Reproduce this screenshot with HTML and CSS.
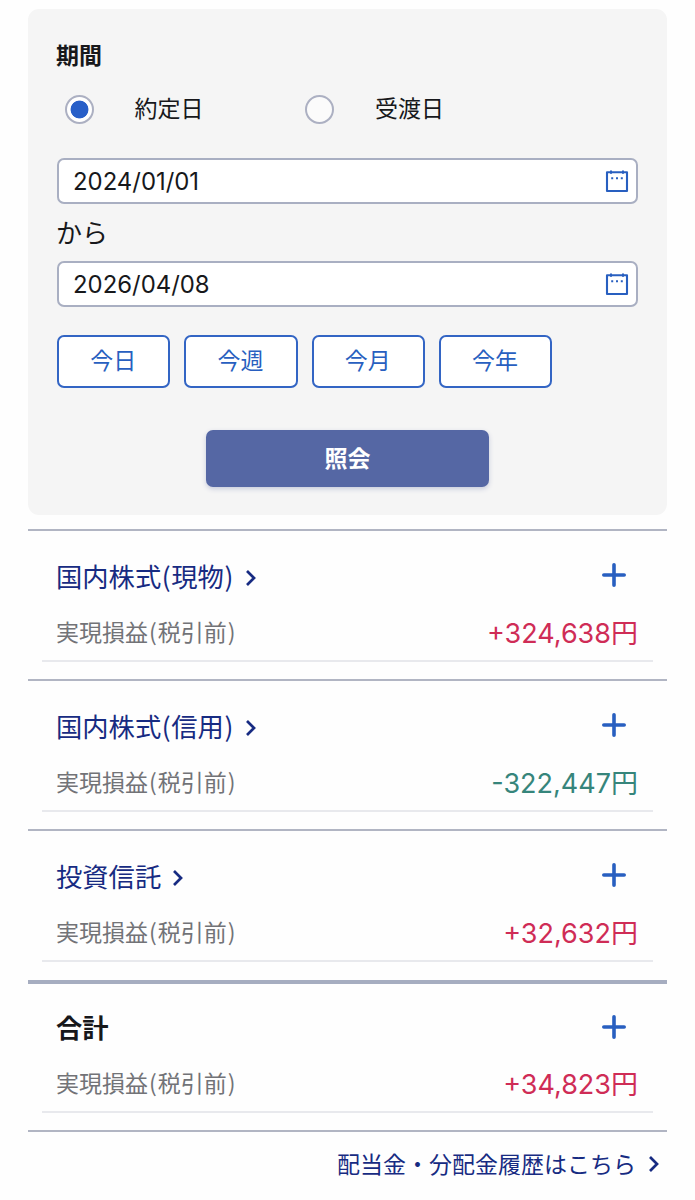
FILE: index.html
```html
<!DOCTYPE html>
<html lang="ja">
<head>
<meta charset="utf-8">
<title>実現損益</title>
<link rel="stylesheet" href="styles.css">
</head>
<body>
<svg class="defs" width="0" height="0">
  <symbol id="calendar" viewBox="0 0 24 24"><path d="M2 3.2H22V22H2Z" fill="none" stroke="currentColor" stroke-width="2.1" stroke-linejoin="round"/><path d="M6 1.5V4.8M18 1.5V4.8" stroke="currentColor" stroke-width="2"/><path d="M6.2 9.2h2M11 9.2h2M15.8 9.2h2" stroke="currentColor" stroke-width="2"/></symbol>
  <symbol id="chevron" viewBox="0 0 12 18"><path d="M2 2L9 9L2 16" fill="none" stroke="currentColor" stroke-width="2.7"/></symbol>
  <symbol id="plus" viewBox="0 0 24 24"><path d="M12 1.8V22.2M1.8 12H22.2" fill="none" stroke="currentColor" stroke-width="3.6" stroke-linecap="round"/></symbol>
</svg>
<main class="page">
  <form class="panel">
    <h2 class="panel-title">期間</h2>
    <div class="radios">
      <label class="radio"><span class="dot checked"></span><span>約定日</span></label>
      <label class="radio"><span class="dot"></span><span>受渡日</span></label>
    </div>
    <div class="date"><span>2024/01/01</span><svg class="calendar"><use href="#calendar"/></svg></div>
    <div class="from">から</div>
    <div class="date"><span>2026/04/08</span><svg class="calendar"><use href="#calendar"/></svg></div>
    <div class="presets">
      <button type="button" class="preset">今日</button>
      <button type="button" class="preset">今週</button>
      <button type="button" class="preset">今月</button>
      <button type="button" class="preset">今年</button>
    </div>
    <button type="button" class="submit">照会</button>
  </form>
  <section class="group">
    <div class="head"><a class="name"><span>国内株式<span class="paren">(</span>現物<span class="paren">)</span></span><svg class="chevron"><use href="#chevron"/></svg></a><svg class="plus"><use href="#plus"/></svg></div>
    <div class="result"><span class="label">実現損益<span class="paren">(</span>税引前<span class="paren">)</span></span><span class="amount gain">+324,638円</span></div>
  </section>
  <section class="group">
    <div class="head"><a class="name"><span>国内株式<span class="paren">(</span>信用<span class="paren">)</span></span><svg class="chevron"><use href="#chevron"/></svg></a><svg class="plus"><use href="#plus"/></svg></div>
    <div class="result"><span class="label">実現損益<span class="paren">(</span>税引前<span class="paren">)</span></span><span class="amount loss">-322,447円</span></div>
  </section>
  <section class="group">
    <div class="head"><a class="name">投資信託<svg class="chevron"><use href="#chevron"/></svg></a><svg class="plus"><use href="#plus"/></svg></div>
    <div class="result"><span class="label">実現損益<span class="paren">(</span>税引前<span class="paren">)</span></span><span class="amount gain">+32,632円</span></div>
  </section>
  <section class="group total">
    <div class="head"><span class="name">合計</span><svg class="plus"><use href="#plus"/></svg></div>
    <div class="result"><span class="label">実現損益<span class="paren">(</span>税引前<span class="paren">)</span></span><span class="amount gain">+34,823円</span></div>
  </section>
  <footer class="footer"><a class="history">配当金・分配金履歴はこちら<svg class="chevron"><use href="#chevron"/></svg></a></footer>
</main>
</body>
</html>
```
FILE: styles.css
```css
* { box-sizing: border-box; }
body {
  margin: 0;
  background: #fefefe;
  color: #17181b;
  font-family: Inter, "Noto Sans CJK JP", sans-serif;
  font-size: 23px;
}
.defs { display: none; }
.page { padding: 9px 28px 0; height: 1200px; overflow: hidden; }
.panel {
  height: 506px;
  padding: 31px 29px 0;
  border-radius: 11px;
  background: #f5f5f5;
}
.panel-title { margin: 0 0 0 -1px; height: 32px; line-height: 32px; font-size: 23px; font-weight: 700; }
.radios { display: flex; height: 74px; padding: 12px 8px 0; line-height: 50px; margin-bottom: 12px; }
.radio { display: flex; align-items: center; gap: 40.5px; width: 240.4px; height: 50px; }
.dot {
  display: flex;
  width: 29px;
  height: 29px;
  border: 2px solid #acb0c2;
  border-radius: 50%;
  background: #fbfbfb;
}
.checked { background: radial-gradient(circle, #285fc8 8.5px, #fff 9.3px); }
.date {
  display: flex;
  align-items: center;
  justify-content: space-between;
  height: 46px;
  padding: 0 7px 0 14px;
  border: 2px solid #a9afc2;
  border-radius: 7px;
  background: #fff;
  font-size: 23.9px;
}
.calendar { width: 24px; height: 24px; color: #285fc0; }
.from { height: 57px; padding-top: 2px; line-height: 56px; font-size: 26px; text-indent: -1px; }
.presets { display: flex; gap: 14px; margin-top: 28px; }
.preset {
  width: 113.3px;
  height: 53px;
  padding: 0 1px 5px 0;
  border: 2px solid #3365c4;
  border-radius: 7px;
  background: #fff;
  color: #285fc0;
  font: 23px "Noto Sans CJK JP", sans-serif;
}
.submit {
  display: block;
  width: 283px;
  height: 57px;
  margin: 42px auto 0;
  padding: 0 0 4px;
  border: 0;
  border-radius: 7px;
  background: #5567a4;
  box-shadow: 0 2px 5px #c7cbdc;
  color: #fff;
  font: 700 23px "Noto Sans CJK JP", sans-serif;
}
.group { height: 150.2px; padding: 0 14px; border-top: 2px solid #b1b5c3; }
.panel + .group { margin-top: 14px; }
.head {
  display: flex;
  align-items: center;
  justify-content: space-between;
  height: 72px;
  padding: 20px 27px 0 14px;
}
.name { display: flex; align-items: center; gap: 11px; margin-bottom: 4px; font: 26.3px "Noto Sans CJK JP", sans-serif; color: #172b82; }
.chevron { width: 12px; height: 18px; }
.name .chevron { margin-top: 5px; }
.paren { padding: 0 1px; }
.name .paren { padding: 0 .6px; }
.plus { width: 24px; height: 24px; margin-bottom: 5px; color: #285fc0; }
.result {
  display: flex;
  align-items: center;
  justify-content: space-between;
  height: 59px;
  padding: 0 15px 1px 14px;
  border-bottom: 2px solid #e8e9ed;
}
.label { margin-bottom: 1px; color: #727377; font: 23px "Noto Sans CJK JP", sans-serif; }
.amount { font-size: 27px; }
.gain { color: #cf2c56; }
.loss { color: #36857b; }
.total { border-top: 4px solid #a6adc0; }
.total .name { color: #17181b; font-weight: 700; margin-bottom: 6px; }
.total .result { height: 57px; padding-bottom: 2px; }
.footer { display: flex; justify-content: flex-end; padding: 14px 7px 0 0; border-top: 2px solid #b1b5c3; }
.history { display: flex; align-items: center; gap: 12px; color: #172b82; font: 23px "Noto Sans CJK JP", sans-serif; }
.history .chevron { margin-top: 2px; }
```
